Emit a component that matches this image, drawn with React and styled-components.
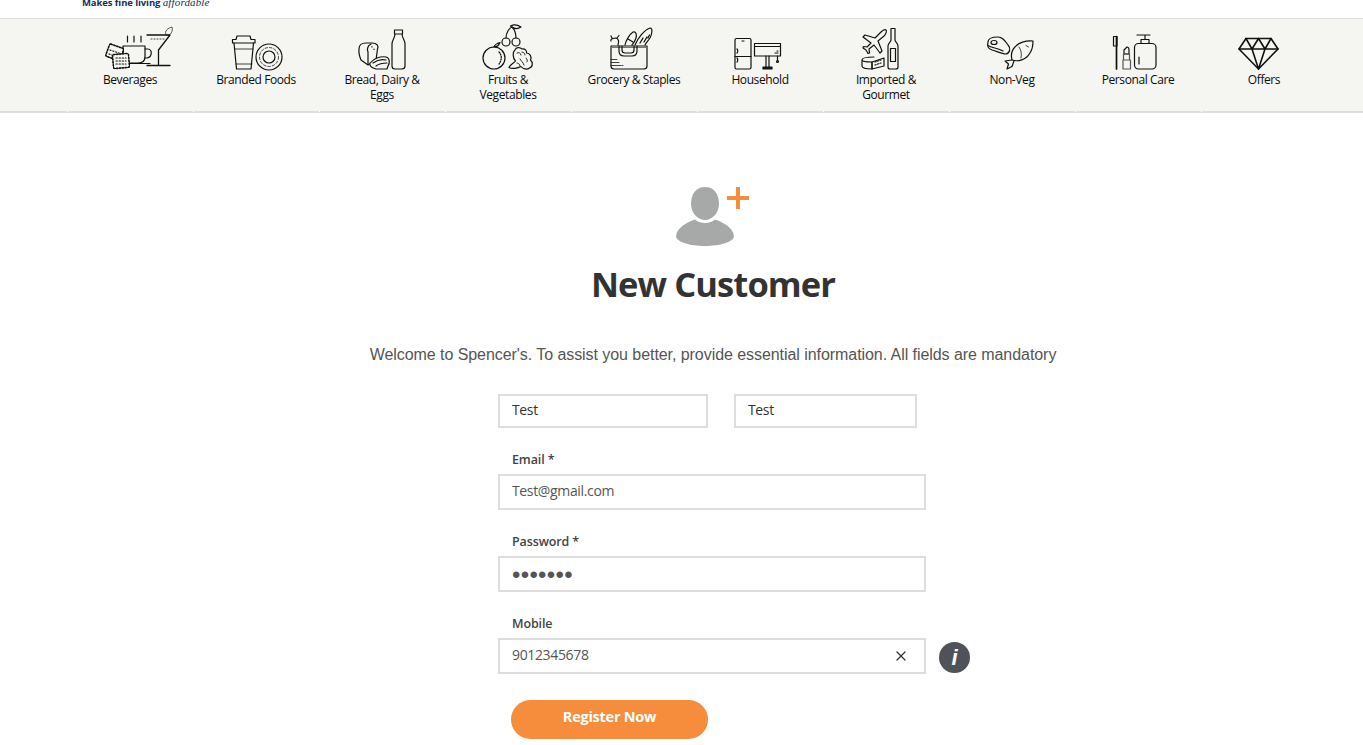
import React from 'react';
import styled, { createGlobalStyle } from 'styled-components';
import { X } from 'lucide-react';

const BAR_BG = '#f5f5f1';
const FIELD_FONT = '"Open Sans", "Noto Sans", sans-serif';

const GlobalStyle = createGlobalStyle`
  html, body {
    margin: 0;
    padding: 0;
    height: 100%;
    overflow: hidden;
    background: #fff;
  }
  * { box-sizing: border-box; }
`;

const TopStrip = styled.header`
  height: 19px;
  padding-left: 82px;
  border-bottom: 1px solid #ddd;
  overflow: hidden;
  background: #fff;
`;

const Tagline = styled.div`
  margin-top: -4px;
  font: 700 9.5px/12px ${FIELD_FONT};
  letter-spacing: -0.1px;
  color: #12305a;

  em {
    font: italic 400 11px/12px "Liberation Serif", serif;
    letter-spacing: 0.15px;
  }
`;

const NavBar = styled.nav`
  display: flex;
  height: 94px;
  padding: 5px 0 0 67px;
  background: ${BAR_BG};
  border-bottom: 2px solid #ddd;
`;

const NavItem = styled.a`
  position: relative;
  flex: 0 0 126px;
  text-align: center;
  color: #0c0c0c;

  &::after {
    content: '';
    position: absolute;
    left: 0;
    bottom: -1px;
    width: 1px;
    height: 1px;
    background: #fff;
  }
`;

const NavLabel = styled.span`
  display: block;
  width: 96px;
  margin: 0 auto;
  font: 400 12px/15px ${FIELD_FONT};
  letter-spacing: -0.4px;
`;

const IconSvg = styled.svg`
  display: block;
  width: 126px;
  height: 48px;
  overflow: visible;
  fill: none;
  stroke: #111;
  stroke-width: ${(p) => p.$weight || 1.2};
  stroke-linejoin: round;
  stroke-linecap: round;
`;

const Main = styled.main`
  width: 1000px;
  margin-left: 213px;
  padding-top: 73px;
  text-align: center;
`;

const AvatarSvg = styled.svg`
  display: block;
  width: 76px;
  height: 62px;
  margin: 0 auto;
`;

const Heading = styled.h1`
  margin: 12px 0 0;
  font: 700 34.5px/48px ${FIELD_FONT};
  letter-spacing: -0.9px;
  color: #333;
`;

const Intro = styled.p`
  margin: 37px 0 0;
  font: 400 16px/20px "Liberation Sans", Arial, sans-serif;
  letter-spacing: -0.06px;
  color: #555;
`;

const Form = styled.form`
  margin: 29px 0 0 285px;
  text-align: left;
`;

const NameRow = styled.div`
  display: flex;
  gap: 26px;
`;

const TextInput = styled.input`
  display: block;
  width: ${(p) => p.$width || 428}px;
  height: ${(p) => p.$height || 36}px;
  padding: 0 12px 4px;
  border: 2px solid #ddd;
  border-radius: 0;
  outline: none;
  background: #fff;
  font: 400 14px/20px ${FIELD_FONT};
  letter-spacing: -0.35px;
  color: ${(p) => p.$dark ? '#333' : '#555'};

  &[type='password'] {
    padding: 2px 12px 0;
    font: 400 24px/20px "Liberation Sans", Arial, sans-serif;
    letter-spacing: 0.3px;
  }
`;

const Field = styled.div`
  margin-top: 23px;
`;

const FieldLabel = styled.label`
  display: block;
  height: 16px;
  margin-bottom: 7px;
  padding-left: 14px;
  font: 600 12.5px/18px ${FIELD_FONT};
  letter-spacing: -0.12px;
  color: #444;
`;

const MobileRow = styled.div`
  display: flex;
  align-items: center;
  gap: 13px;
`;

const InputWrap = styled.div`
  position: relative;
  width: 428px;
`;

const ClearButton = styled.span`
  position: absolute;
  top: 10px;
  right: 17px;
  display: flex;
  color: #333;
`;

const InfoBadge = styled.span`
  display: flex;
  align-items: center;
  justify-content: center;
  width: 31px;
  height: 31px;
  margin-top: 2px;
  border-radius: 50%;
  background: #4f5359;
  color: #fff;
  font: italic 700 22px/31px "Liberation Sans", Arial, sans-serif;
`;

const RegisterButton = styled.button`
  display: block;
  width: 197px;
  height: 39px;
  margin: 26px 0 0 13px;
  padding: 0 0 5px;
  border: 0;
  border-radius: 20px;
  background: #f58d3d;
  color: #fff;
  font: 700 14.5px/20px ${FIELD_FONT};
  letter-spacing: -0.25px;
`;

// icons are drawn in page coordinates, one 126x48 cell each
const Icon = ({ left, weight, children }) => (
  <IconSvg viewBox={`${left} 24 126 48`} $weight={weight}>{children}</IconSvg>
);

const Beverages = () => (
  <Icon left={67}>
    <path d="M147 35H170L158.500 50V65M147 65.500H170" strokeWidth="1.300" />
    <path d="M151 39H166" strokeDasharray="1 2" strokeWidth=".8" />
    <path d="M166 35C164 31 168 28 172 27C173 31 171 36 167 35" strokeWidth=".7" />
    <path d="M127.500 36v6M134 36v6M141 36v6" />
    <path d="M123 46H145V57C145 61 142 63 138 63H130C126 63 123 61 123 57Z" />
    <path d="M145 49h3c4.500 0 4.500 8-1 9h-2.500M124 63.500H150" />
    <rect x="107" y="46" width="15" height="13" rx="1.500" strokeWidth="1" fill={BAR_BG} transform="rotate(20 115 53)" />
    <rect x="107" y="46" width="15" height="13" rx="1.500" strokeWidth="1.600" strokeDasharray=".6 2.400" transform="rotate(20 115 53)" />
    <path d="M110 50l9 3M109 54l9 3" strokeDasharray="1 2" />
    <rect x="113" y="54" width="16" height="14" rx="1.500" strokeWidth="1" fill={BAR_BG} transform="rotate(-5 121 61)" />
    <rect x="113" y="54" width="16" height="14" rx="1.500" strokeWidth="1.600" strokeDasharray=".6 2.400" transform="rotate(-5 121 61)" />
    <path d="M116 58h10M116 61h10M116 64h10" strokeDasharray="1.300 1.800" strokeWidth="1.200" />
  </Icon>
);

const BrandedFoods = () => (
  <Icon left={193}>
    <path d="M232.500 43V39.500H236L237 36H250L251 39.500H255V43Z" />
    <path d="M234 43L236.500 69H251L253.500 43" />
    <path d="M235 49H253M236 64H252" strokeWidth=".8" />
    <circle cx="269" cy="57" r="13" />
    <circle cx="269" cy="57" r="6" />
    <circle cx="269" cy="57" r="9.500" strokeDasharray="2.500 2" strokeWidth=".8" />
  </Icon>
);

const BreadDairy = () => (
  <Icon left={319}>
    <path d="M366 43H372C377 43 379 46 377.500 49L376 60L368 65L361 60C359 55 358.500 52 359 49C359 45 362 43 366 43Z" />
    <path d="M371 44C367 46 367 50 368 52V64" />
    <path d="M372 46.500v.5M374 49v.5" />
    <path d="M370 63C374 58 381 56 386 57C390 58 390 63 388 66L387 69H376C372 68 369 66 370 63Z" fill={BAR_BG} />
    <path d="M373 63C377 60 382 59 386 60M376 66C380 63 384 63 387 63" />
    <path d="M394.500 30H402.500V34H402C402 38 405 40 405 44V66C405 68 404 69 402 69H395C393 69 392 68 392 66V44C392 40 395 38 395 34H394.500ZM395 34H402" />
  </Icon>
);

const FruitsVeg = () => (
  <Icon left={445}>
    <circle cx="494" cy="58" r="11" />
    <path d="M499 52C502 55 502 60 499 64" strokeDasharray="1 1.500" strokeWidth="1.300" />
    <path d="M494 47C495 44 498 43 500 42.500C499 45 497 47 494 47Z" />
    <circle cx="506" cy="42" r="4" />
    <circle cx="516" cy="42" r="4" />
    <path d="M506 38C506 33 509 28 512 27M516 38C516 33 514 29 512 27" />
    <path d="M510.500 26C514 24 518 25 521 27C518 29 514 29 510.500 26Z" />
    <path d="M515 50C516 47 520 47 522 49C525 48 527 51 526.500 53C530 53 532 57 530.500 60C533 62 533 67 529.500 68C527 70 523 69 521 66.500C518 68 512 69.500 509 67.500C510 64.500 513.500 63.500 515.500 61C512.500 58 512.500 52 515 50Z" />
    <path d="M517 53c2-1 4 0 4 2M522 52c2 0 3 2 3 3M526 58c1 1 2 3 1 4M520 59c1 2 3 3 4 6M517 63c1 0 3 1 3 3" strokeWidth=".9" />
  </Icon>
);

const Grocery = () => (
  <Icon left={571}>
    <path d="M611 41C610 39 614 38 616 38C619 39 619 42 618 45M617 38l2-2.500M612 38l-1-2" />
    <path d="M625 45C626 40 630 34 633 32C636 31 637 35 636 38C635 41 633 44 632 45M628 39l5 3" />
    <path d="M635 45C638 38 644 30 650 28C653 28 652 34 650 38C648 41 646 43 645 45" />
    <path d="M640 43l3-5M644 42l3-5M648 38l1.500-3" strokeWidth="1.300" />
    <path d="M611 46H647V66C647 68 646 69 644 69H614C612 69 611 68 611 66Z" />
    <path d="M611 47.500H647" stroke="#777" />
    <path d="M619 46V51C619 54 621 56 624 56H632C635 56 637 54 637 51V46M622 46V50C622 52 623 53 625 53H631C633 53 634 52 634 50V46" />
    <path d="M611 59.500h6M611 62.500h8M611 65.500h10M622 65.500h1" strokeWidth=".8" />
  </Icon>
);

const Household = () => (
  <Icon left={697}>
    <rect x="735" y="38.500" width="16" height="30.500" rx="1.500" />
    <path d="M735 56.500h16M742 41h2M737 49c1 1 1 3 0 4M737 58c1 1 1 3 0 4" />
    <rect x="754.500" y="43.500" width="26" height="12.500" />
    <path d="M754.500 46.500h26M766 56V67M769 56V67" />
    <rect x="763" y="67" width="9" height="2" fill="#1a1a1a" />
    <path d="M777.500 56V61M777 51h1M775 53h3" />
    <circle cx="777.500" cy="61.500" r="1" />
  </Icon>
);

const Imported = () => (
  <Icon left={823}>
    <path d="M886 30C887 31 886 34 884 36L878 41L882 51L880 53L874 45L869 49L869.500 53L868 53.500L866 50L863 48L863.500 46.500L867 47L871 43L863 37L865 35L875 38L881 32C883 30 885 29 886 30Z" />
    <path d="M891 28.500H895V40C895 42 898 43 898 46V67C898 68 897 69 896 69H890C889 69 888 68 888 67V46C888 43 891 42 891 40Z" />
    <rect x="890.500" y="48.500" width="5" height="13" />
    <path d="M862 60V66C862 68 867 69 872 69V62C867 62 862 62 862 60ZM862 60C862 58 868 57 874 57" />
    <path d="M872 62L884 58V66L872 69Z" />
    <path d="M875 62l6-2M875 65l6-2" strokeDasharray="1.200 1.500" />
  </Icon>
);

const NonVeg = () => (
  <Icon left={949}>
    <path d="M988 42C988 38 993 37 998 37C1003 37 1005 41 1008 45C1011 48 1010 53 1006 54C1002 54 996 51 992 50C988 49 987 46 988 42Z" />
    <path d="M988 45.500C992 48 998 48 1003 51" />
    <ellipse cx="994" cy="42.500" rx="3" ry="2" />
    <path d="M1033 41C1026 40 1018 43 1015 47C1011 51 1011 56 1012 60C1018 62 1026 60 1030 53C1032 50 1033 45 1033 41Z" fill={BAR_BG} />
    <path d="M1012 60L1005 61L1008.500 64L1007 69L1012 66.500L1014 61" />
    <path d="M1026 45.500l2.500 1.500M1019 47c2 3 3 6 2 11" strokeWidth=".8" />
  </Icon>
);

const PersonalCare = () => (
  <Icon left={1075}>
    <path d="M1113.500 36.500h3.500V46h-3.500Z" />
    <path d="M1116.500 36.500V69" strokeWidth="1.700" />
    <path d="M1124 54V50L1127 47C1128 47 1129 48 1129 50V54Z" />
    <path d="M1123.500 54h6v6h-6ZM1123 60h7.500v9H1123Z" stroke="#555" />
    <path d="M1137 35H1150M1145 35V39.500M1141 39.500h8v4h-8Z" />
    <rect x="1134.500" y="43.500" width="21.500" height="25.500" rx="4" />
    <path d="M1139 57v7" />
  </Icon>
);

const Offers = () => (
  <Icon left={1201} weight={1.6}>
    <path d="M1246 38.500H1271L1278 49L1258.500 69L1239 49Z" />
    <path d="M1239 49H1278M1246 38.500L1252 49L1258.500 38.500L1265 49L1271 38.500M1252 49L1258.500 69L1265 49" />
  </Icon>
);

const categories = [
  { name: 'Beverages', Art: Beverages },
  { name: 'Branded Foods', Art: BrandedFoods },
  { name: 'Bread, Dairy & Eggs', Art: BreadDairy },
  { name: 'Fruits & Vegetables', Art: FruitsVeg },
  { name: 'Grocery & Staples', Art: Grocery },
  { name: 'Household', Art: Household },
  { name: 'Imported & Gourmet', Art: Imported },
  { name: 'Non-Veg', Art: NonVeg },
  { name: 'Personal Care', Art: PersonalCare },
  { name: 'Offers', Art: Offers },
];

export default function App() {
  return (
    <>
      <GlobalStyle />
      <TopStrip>
        <Tagline>Makes fine living <em>affordable</em></Tagline>
      </TopStrip>
      <NavBar>
        {categories.map(({ name, Art }) => (
          <NavItem key={name}>
            <Art />
            <NavLabel>{name}</NavLabel>
          </NavItem>
        ))}
      </NavBar>
      <Main>
        <AvatarSvg viewBox="675 185 76 62">
          <path d="M705 186C714 186 719 193 719 203C719 212 712 219 705 219C698 219 691 212 691 203C691 193 696 186 705 186Z" fill="#a7a9a8" />
          <path d="M695 218.500C699 223 711 223 715 218.500C722 221 733 226 734 235C734 241 720 245 705 245C690 245 676 241 676 235C677 226 688 221 695 218.500Z" fill="#a7a9a8" />
          <path d="M727 197H749M738 186V208" stroke="#f58d3d" strokeWidth="4" fill="none" />
        </AvatarSvg>
        <Heading>New Customer</Heading>
        <Intro>Welcome to Spencer's. To assist you better, provide essential information. All fields are mandatory</Intro>
        <Form>
          <NameRow>
            <TextInput $width={210} $height={34} $dark defaultValue="Test" />
            <TextInput $width={183} $height={34} $dark defaultValue="Test" />
          </NameRow>
          <Field>
            <FieldLabel>Email *</FieldLabel>
            <TextInput defaultValue="Test@gmail.com" />
          </Field>
          <Field>
            <FieldLabel>Password *</FieldLabel>
            <TextInput type="password" defaultValue="1234567" />
          </Field>
          <Field>
            <FieldLabel>Mobile</FieldLabel>
            <MobileRow>
              <InputWrap>
                <TextInput defaultValue="9012345678" />
                <ClearButton><X size={16} strokeWidth={1.9} /></ClearButton>
              </InputWrap>
              <InfoBadge>i</InfoBadge>
            </MobileRow>
          </Field>
          <RegisterButton type="button">Register Now</RegisterButton>
        </Form>
      </Main>
    </>
  );
}
